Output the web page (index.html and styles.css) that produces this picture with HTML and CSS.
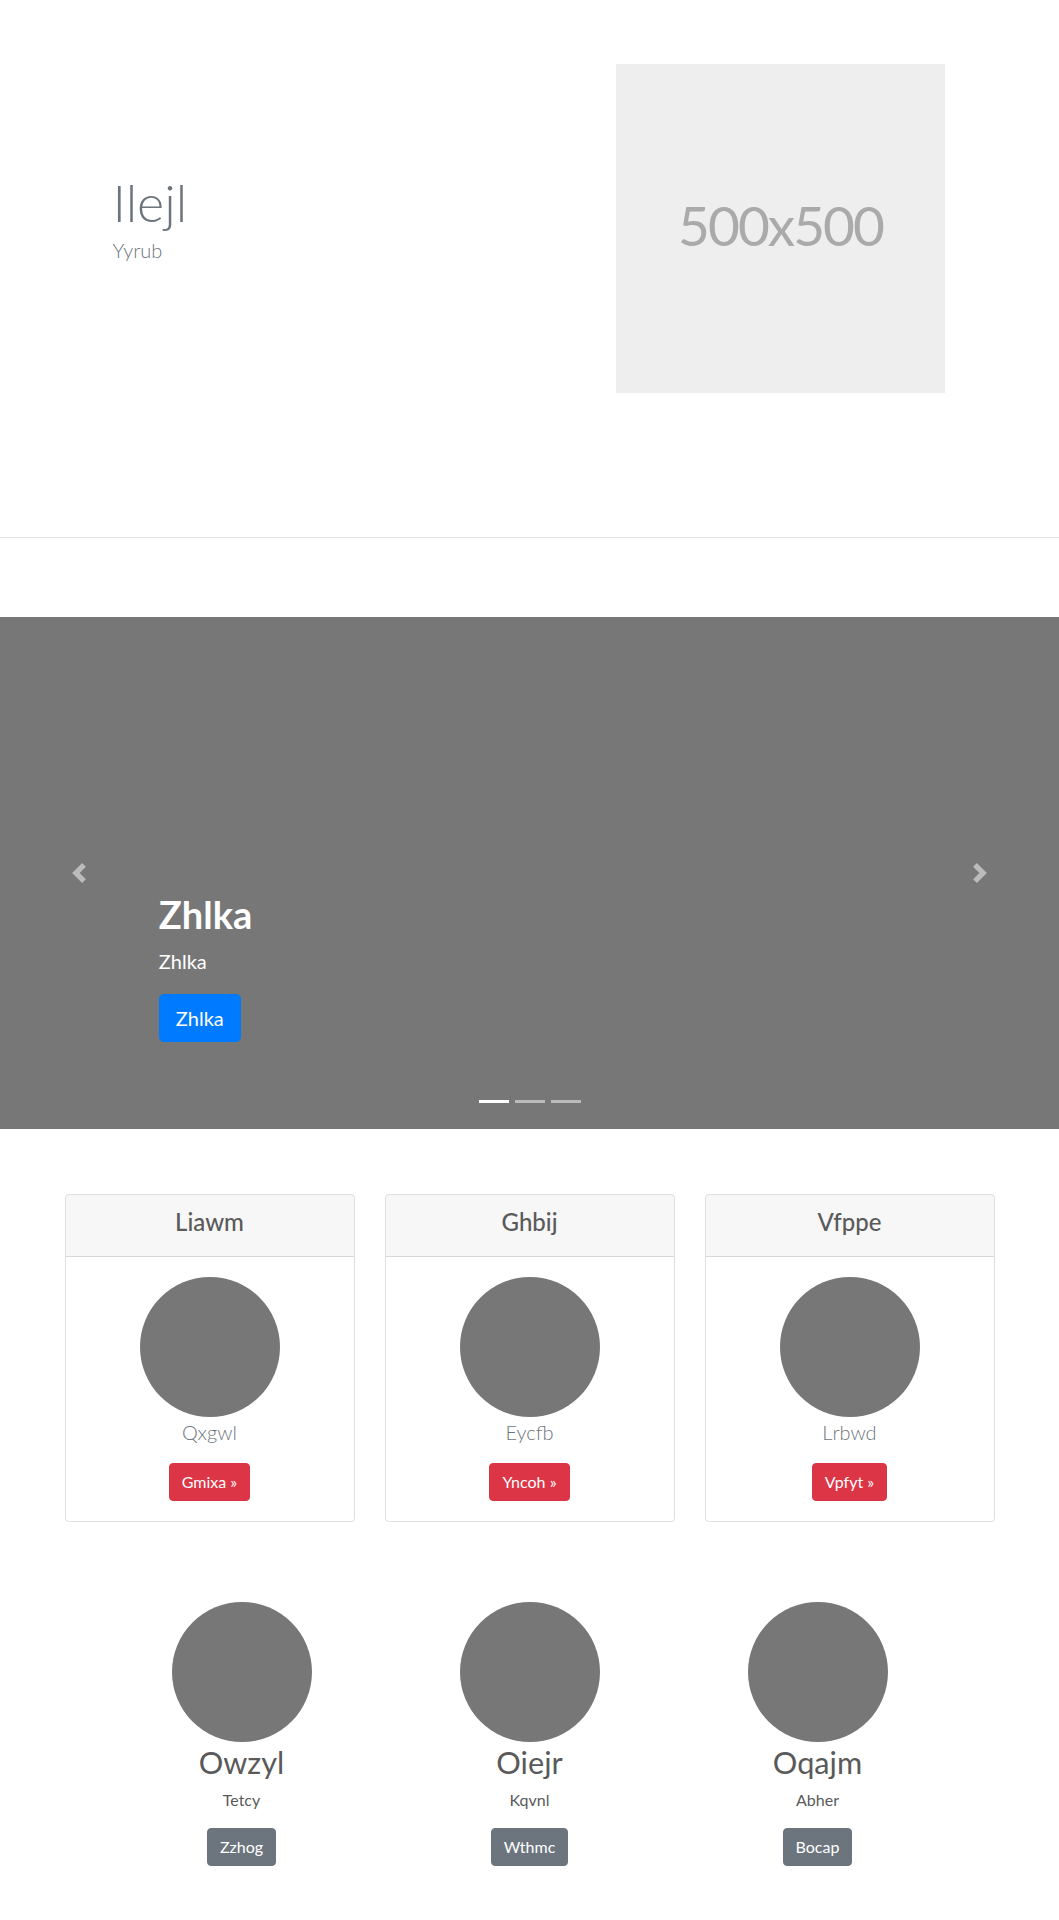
FILE: index.html
```html
<!DOCTYPE html>
<html lang="en">
<head>
<meta charset="utf-8">
<title>Ilejl</title>
<link rel="stylesheet" href="styles.css">
</head>
<body>
<main>
  <section class="hero">
    <div class="hero-inner">
      <div class="hero-text">
        <h1 class="hero-title">Ilejl</h1>
        <p class="lead muted hero-lead">Yyrub</p>
      </div>
      <div class="placeholder"><span>500x500</span></div>
    </div>
  </section>

  <hr class="divider">

  <div class="carousel">
    <div class="caption">
      <h1 class="caption-title">Zhlka</h1>
      <p class="caption-text">Zhlka</p>
      <div class="caption-cta"><a class="btn btn-lg btn-primary" href="#">Zhlka</a></div>
    </div>
    <a class="ctrl ctrl-prev" href="#" aria-label="Previous">
      <svg viewBox="0 0 8 8" width="20" height="20"><path fill="#fff" d="M5.25 0l-4 4 4 4 1.5-1.5L4.25 4l2.5-2.5L5.25 0z"/></svg>
    </a>
    <a class="ctrl ctrl-next" href="#" aria-label="Next">
      <svg viewBox="0 0 8 8" width="20" height="20"><path fill="#fff" d="M2.75 0l-1.5 1.5L3.75 4l-2.5 2.5L2.75 8l4-4-4-4z"/></svg>
    </a>
    <ol class="indicators">
      <li class="active"></li>
      <li></li>
      <li></li>
    </ol>
  </div>

  <div class="cards">
    <div class="card">
      <div class="card-header"><h4 class="card-title">Liawm</h4></div>
      <div class="card-body">
        <div class="circle"></div>
        <p class="lead muted card-lead">Qxgwl</p>
        <a class="btn btn-danger" href="#">Gmixa &raquo;</a>
      </div>
    </div>
    <div class="card">
      <div class="card-header"><h4 class="card-title">Ghbij</h4></div>
      <div class="card-body">
        <div class="circle"></div>
        <p class="lead muted card-lead">Eycfb</p>
        <a class="btn btn-danger" href="#">Yncoh &raquo;</a>
      </div>
    </div>
    <div class="card">
      <div class="card-header"><h4 class="card-title">Vfppe</h4></div>
      <div class="card-body">
        <div class="circle"></div>
        <p class="lead muted card-lead">Lrbwd</p>
        <a class="btn btn-danger" href="#">Vpfyt &raquo;</a>
      </div>
    </div>
  </div>

  <div class="marketing">
    <div class="feature">
      <div class="circle"></div>
      <h2 class="feature-title">Owzyl</h2>
      <p class="feature-text">Tetcy</p>
      <a class="btn btn-secondary" href="#">Zzhog</a>
    </div>
    <div class="feature">
      <div class="circle"></div>
      <h2 class="feature-title">Oiejr</h2>
      <p class="feature-text">Kqvnl</p>
      <a class="btn btn-secondary" href="#">Wthmc</a>
    </div>
    <div class="feature">
      <div class="circle"></div>
      <h2 class="feature-title">Oqajm</h2>
      <p class="feature-text">Abher</p>
      <a class="btn btn-secondary" href="#">Bocap</a>
    </div>
  </div>
</main>
</body>
</html>
```

FILE: styles.css
```css
* {
  box-sizing: border-box;
}

html, body {
  margin: 0;
  padding: 0;
}

body {
  font-family: Lato, "Open Sans", sans-serif;
  font-size: 16px;
  line-height: 1.5;
  color: #5a5a5a;
  background: #fff;
}

.muted {
  color: #6c757d;
}

.lead {
  font-size: 20px;
  font-weight: 300;
  line-height: 1.5;
}

/* ---------- hero ---------- */
.hero {
  padding: 64px 0;
}

.hero-inner {
  width: 960px;
  margin: 0 auto;
  padding: 0 63px;
  display: flex;
  align-items: center;
  justify-content: space-between;
}

.hero-title {
  margin: 0 0 1px;
  font-size: 52px;
  font-weight: 300;
  line-height: 1.2;
  color: #6c757d;
}

.hero-lead {
  margin: 0 0 21px;
}

.placeholder {
  width: 329px;
  height: 329px;
  margin-right: 1.5px;
  background: #eee;
  color: #aaa;
  display: flex;
  align-items: center;
  justify-content: center;
  font-size: 55px;
  letter-spacing: -2px;
  padding-bottom: 6px;
}

.divider {
  margin: 80px 0 79px;
  height: 0;
  border: 0;
  border-top: 1px solid rgba(0, 0, 0, 0.1);
}

/* ---------- carousel ---------- */
.carousel {
  position: relative;
  height: 512px;
  background: #777;
  overflow: hidden;
}

.caption {
  position: absolute;
  left: 15%;
  right: 15%;
  bottom: 48px;
  padding: 20px 0;
  color: #fff;
  z-index: 10;
}

.caption-title {
  margin: 0 0 8px;
  font-size: 38px;
  font-weight: 700;
  line-height: 1.2;
}

.caption-text {
  margin: 0 0 18px;
  font-size: 20px;
  line-height: 1.5;
}

.caption-cta {
  margin-bottom: 19px;
  line-height: 0;
}

.ctrl {
  position: absolute;
  top: 0;
  bottom: 0;
  width: 15%;
  display: flex;
  align-items: center;
  justify-content: center;
  opacity: 0.5;
  z-index: 5;
}

.ctrl-prev {
  left: 0;
}

.ctrl-next {
  right: 0;
}

.indicators {
  position: absolute;
  left: 0;
  right: 0;
  bottom: 0;
  margin: 0 0 16px;
  padding: 0;
  list-style: none;
  display: flex;
  justify-content: center;
  z-index: 15;
}

.indicators li {
  width: 30px;
  height: 3px;
  margin: 0 3px;
  box-sizing: content-box;
  background: #fff;
  background-clip: padding-box;
  border-top: 10px solid transparent;
  border-bottom: 10px solid transparent;
  opacity: 0.5;
}

.indicators li.active {
  opacity: 1;
}

/* ---------- buttons ---------- */
.btn {
  display: inline-block;
  vertical-align: top;
  padding: 6px 12px;
  font-size: 16px;
  line-height: 1.5;
  border: 1px solid transparent;
  border-radius: 4px;
  color: #fff;
  text-decoration: none;
}

.btn-lg {
  padding: 8px 16px;
  font-size: 20px;
  border-radius: 4.8px;
}

.btn-primary {
  background: #007bff;
  border-color: #007bff;
}

.btn-danger {
  background: #dc3545;
  border-color: #dc3545;
}

.btn-secondary {
  background: #6c757d;
  border-color: #6c757d;
}

/* ---------- cards ---------- */
.cards {
  width: 960px;
  margin: 65px auto 0;
  padding: 0 15px;
  display: grid;
  grid-template-columns: repeat(3, 1fr);
  column-gap: 30px;
}

.card {
  border: 1px solid rgba(0, 0, 0, 0.125);
  border-radius: 4px;
  text-align: center;
  overflow: hidden;
}

.card-header {
  padding: 12px 20px;
  background: rgba(0, 0, 0, 0.03);
  border-bottom: 1px solid rgba(0, 0, 0, 0.125);
}

.card-title {
  margin: 1px 0 7px;
  font-size: 24px;
  font-weight: 500;
  line-height: 1.2;
}

.card-body {
  padding: 20px;
}

.circle {
  width: 140px;
  height: 140px;
  margin: 0 auto;
  border-radius: 50%;
  background: #777;
}

.card-lead {
  margin: 0 0 16px;
}

/* ---------- marketing ---------- */
.marketing {
  width: 864px;
  margin: 80px auto 0;
  display: grid;
  grid-template-columns: repeat(3, 1fr);
  text-align: center;
  padding-bottom: 24px;
}

.feature {
  padding: 0 15px;
}

.feature-title {
  margin: 3px 0 6px;
  font-size: 30.7px;
  font-weight: 400;
  line-height: 1.2;
}

.feature-text {
  margin: 0 0 16px;
}
```
